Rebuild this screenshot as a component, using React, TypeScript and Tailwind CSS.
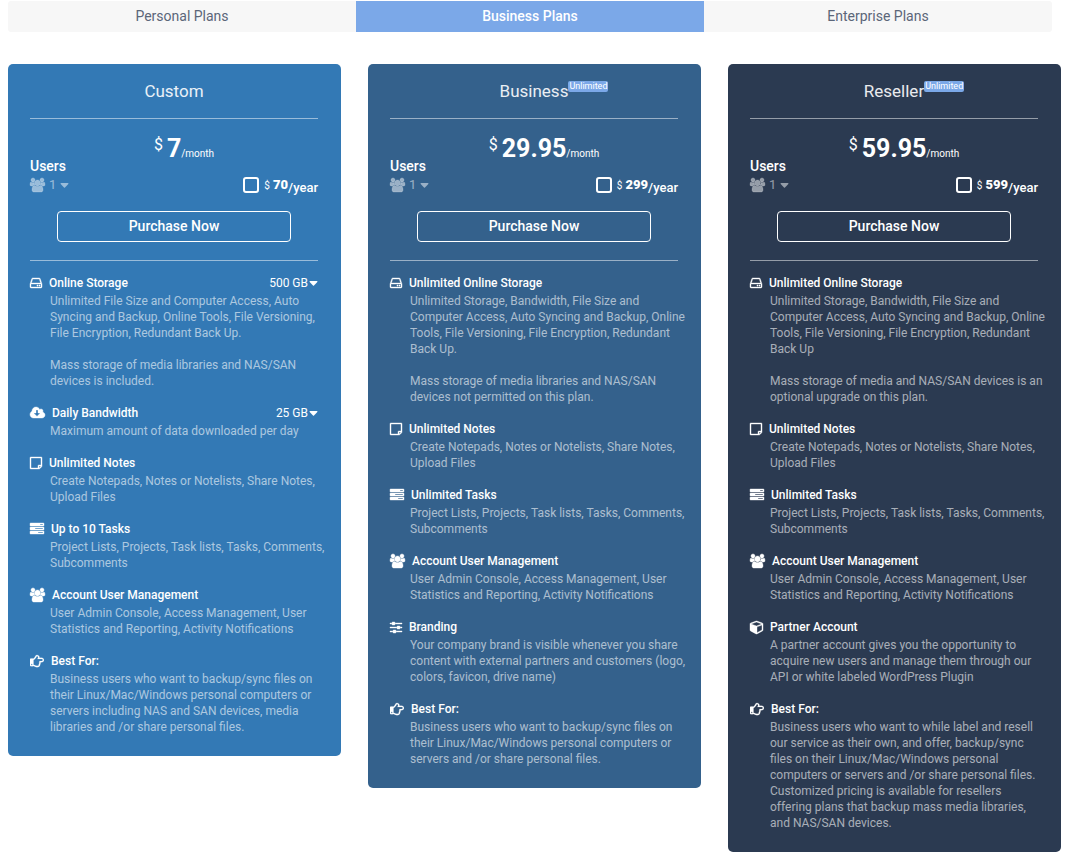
import React from 'react';
import { FaRegHandPointRight } from 'react-icons/fa';

const ICONS = {
    users: {
        box: '0 0 1920 1792',
        d: 'M593 896q-162 5-265 128H194q-82 0-138-40.5T0 865q0-353 124-353 6 0 43.5 21t97.5 42.5T384 597q67 0 133-23-5 37-5 66 0 139 81 256zm1071 637q0 120-73 189.5t-194 69.5H523q-121 0-194-69.5T256 1533q0-53 3.5-103.5t14-109T300 1212t43-97.5 62-81 85.5-53.5T602 960q10 0 43 21.5t73 48 107 48 135 21.5 135-21.5 107-48 73-48 43-21.5q61 0 111.5 20t85.5 53.5 62 81 43 97.5 26.5 108.5 14 109 3.5 103.5zM640 256q0 106-75 181t-181 75-181-75-75-181 75-181T384 0t181 75 75 181zm704 384q0 159-112.5 271.5T960 1024 688.5 911.5 576 640t112.5-271.5T960 256t271.5 112.5T1344 640zm576 225q0 78-56 118.5t-138 40.5h-134q-103-123-265-128 81-117 81-256 0-29-5-66 66 23 133 23 59 0 119-21.5t97.5-42.5 43.5-21q124 0 124 353zm-128-609q0 106-75 181t-181 75-181-75-75-181 75-181 181-75 181 75 75 181z',
        size: 'w-[15px] h-[14px]',
    },
    storage: {
        box: '0 0 1536 1792',
        d: 'M1040 1216q0 33-23.5 56.5T960 1296t-56.5-23.5T880 1216t23.5-56.5T960 1136t56.5 23.5 23.5 56.5zm256 0q0 33-23.5 56.5t-56.5 23.5-56.5-23.5-23.5-56.5 23.5-56.5 56.5-23.5 56.5 23.5 23.5 56.5zm112 160v-320q0-13-9.5-22.5T1376 1024H160q-13 0-22.5 9.5T128 1056v320q0 13 9.5 22.5t22.5 9.5h1216q13 0 22.5-9.5t9.5-22.5zM178 896h1180l-157-482q-4-13-16-21.5t-26-8.5H377q-14 0-26 8.5T335 414zm1358 160v320q0 66-47 113t-113 47H160q-66 0-113-47T0 1376v-320q0-25 16-75l197-606q17-53 63-86t101-33h782q55 0 101 33t63 86l197 606q16 50 16 75z',
        size: 'w-[12px] h-[14px]',
    },
    bandwidth: {
        box: '0 0 1920 1792',
        d: 'M1280 928q0-14-9-23t-23-9h-224V544q0-13-9.5-22.5T992 512H800q-13 0-22.5 9.5T768 544v352H544q-13 0-22.5 9.5T512 928q0 14 9 23l352 352q9 9 23 9t23-9l351-351q10-12 10-24zm640 224q0 159-112.5 271.5T1536 1536H448q-185 0-316.5-131.5T0 1088q0-130 70-240t188-165q-2-30-2-43 0-212 150-362t362-150q156 0 285.5 87T1242 446q71-62 166-62 106 0 181 75t75 181q0 76-41 138 130 31 213.5 135.5T1920 1152z',
        size: 'w-[15px] h-[14px]',
    },
    notes: {
        box: '0 0 1536 1792',
        d: 'M1400 1280h-248v248q29-10 41-22l185-185q12-12 22-41zM1120 1152h288V256H128v1280h896v-288q0-40 28-68t68-28zM1536 224v1024q0 40-20 88t-48 76l-184 184q-28 28-76 48t-88 20H96q-40 0-68-28t-28-68V224q0-40 28-68t68-28h1344q40 0 68 28t28 68z',
        size: 'w-[12px] h-[14px]',
    },
    tasks: {
        box: '0 0 1792 1792',
        d: 'M1024 1408h640v-128h-640v128zm-384-512h1024V768H640v128zm640-512h384V256h-384v128zm512 832v256q0 26-19 45t-45 19H64q-26 0-45-19t-19-45v-256q0-26 19-45t45-19h1664q26 0 45 19t19 45zm0-512v256q0 26-19 45t-45 19H64q-26 0-45-19T0 960V704q0-26 19-45t45-19h1664q26 0 45 19t19 45zm0-512v256q0 26-19 45t-45 19H64q-26 0-45-19T0 448V192q0-26 19-45t45-19h1664q26 0 45 19t19 45z',
        size: 'w-[14px] h-[14px]',
    },
    sliders: {
        box: '0 0 1536 1792',
        d: 'M352 1408v128H0v-128h352zm352-128q26 0 45 19t19 45v256q0 26-19 45t-45 19H448q-26 0-45-19t-19-45v-256q0-26 19-45t45-19h256zm160-384v128H0V896h864zM224 384v128H0V384h224zm1312 1024v128H800v-128h736zM576 256q26 0 45 19t19 45v256q0 26-19 45t-45 19H320q-26 0-45-19t-19-45V320q0-26 19-45t45-19h256zm640 512q26 0 45 19t19 45v256q0 26-19 45t-45 19H960q-26 0-45-19t-19-45V832q0-26 19-45t45-19h256zm320 128v128h-224V896h224zm0-512v128H672V384h864z',
        size: 'w-[12px] h-[14px]',
    },
    cube: {
        box: '0 0 1664 1792',
        d: 'M896 1629l640-349V644l-640 233v752zm-64-865l698-254-698-254-698 254zm832-252v768q0 35-18 65t-49 47l-704 384q-28 16-61 16t-61-16L67 1392q-31-17-49-47t-18-65V512q0-40 23-73t61-47l704-256q22-8 44-8t44 8l704 256q38 14 61 47t23 73z',
        size: 'w-[13px] h-[14px]',
    },
};

type IconName = keyof typeof ICONS | 'hand';

function Icon({ name }: { name: IconName }) {
    if (name === 'hand') {
        return <FaRegHandPointRight className="w-[14px] h-[14px] shrink-0" stroke="currentColor" strokeWidth={6} />;
    }
    const icon = ICONS[name];
    return (
        <svg
            viewBox={icon.box}
            className={`${icon.size} shrink-0 overflow-visible`}
            fill="currentColor"
            stroke="currentColor"
            strokeWidth={50}
            aria-hidden="true"
        >
            <path d={icon.d} />
        </svg>
    );
}

function Caret() {
    return (
        <svg viewBox="0 0 10 6" className="w-[9px] h-[5px] shrink-0" fill="currentColor" aria-hidden="true">
            <path d="M1 0h8q1.2.2.6 1.200L5.600 5.500q-.6.6-1.200 0L.4 1.200Q-.2.2 1 0z" />
        </svg>
    );
}

interface Feature {
    icon: IconName;
    title: string;
    text: string[];
    options?: string[];
}

interface Plan {
    name: string;
    badge?: string;
    bg: string;
    month: string;
    year: string;
    features: Feature[];
}

const NOTES: Feature = {
    icon: 'notes',
    title: 'Unlimited Notes',
    text: ['Create Notepads, Notes or Notelists, Share Notes, Upload Files'],
};

const TASKS: Feature = {
    icon: 'tasks',
    title: 'Unlimited Tasks',
    text: ['Project Lists, Projects, Task lists, Tasks, Comments, Subcomments'],
};

const MANAGEMENT: Feature = {
    icon: 'users',
    title: 'Account User Management',
    text: ['User Admin Console, Access Management, User Statistics and Reporting, Activity Notifications'],
};

const PLANS: Plan[] = [
    {
        name: 'Custom',
        bg: 'bg-[#3379b5]',
        month: '7',
        year: '70',
        features: [
            {
                icon: 'storage',
                title: 'Online Storage',
                options: ['500 GB', '1000 GB', '2000 GB'],
                text: [
                    'Unlimited File Size and Computer Access, Auto Syncing and Backup, Online Tools, File Versioning, File Encryption, Redundant Back Up.',
                    'Mass storage of media libraries and NAS/SAN devices is included.',
                ],
            },
            {
                icon: 'bandwidth',
                title: 'Daily Bandwidth',
                options: ['25 GB', '50 GB', '100 GB'],
                text: ['Maximum amount of data downloaded per day'],
            },
            NOTES,
            { ...TASKS, title: 'Up to 10 Tasks' },
            MANAGEMENT,
            {
                icon: 'hand',
                title: 'Best For:',
                text: ['Business users who want to backup/sync files on their Linux/Mac/Windows personal computers or servers including NAS and SAN devices, media libraries and /or share personal files.'],
            },
        ],
    },
    {
        name: 'Business',
        badge: 'Unlimited',
        bg: 'bg-[#34618c]',
        month: '29.95',
        year: '299',
        features: [
            {
                icon: 'storage',
                title: 'Unlimited Online Storage',
                text: [
                    'Unlimited Storage, Bandwidth, File Size and Computer Access, Auto Syncing and Backup, Online Tools, File Versioning, File Encryption, Redundant Back Up.',
                    'Mass storage of media libraries and NAS/SAN devices not permitted on this plan.',
                ],
            },
            NOTES,
            TASKS,
            MANAGEMENT,
            {
                icon: 'sliders',
                title: 'Branding',
                text: ['Your company brand is visible whenever you share content with external partners and customers (logo, colors, favicon, drive name)'],
            },
            {
                icon: 'hand',
                title: 'Best For:',
                text: ['Business users who want to backup/sync files on their Linux/Mac/Windows personal computers or servers and /or share personal files.'],
            },
        ],
    },
    {
        name: 'Reseller',
        badge: 'Unlimited',
        bg: 'bg-[#2b3a51]',
        month: '59.95',
        year: '599',
        features: [
            {
                icon: 'storage',
                title: 'Unlimited Online Storage',
                text: [
                    'Unlimited Storage, Bandwidth, File Size and Computer Access, Auto Syncing and Backup, Online Tools, File Versioning, File Encryption, Redundant Back Up',
                    'Mass storage of media and NAS/SAN devices is an optional upgrade on this plan.',
                ],
            },
            NOTES,
            TASKS,
            MANAGEMENT,
            {
                icon: 'cube',
                title: 'Partner Account',
                text: ['A partner account gives you the opportunity to acquire new users and manage them through our API or white labeled WordPress Plugin'],
            },
            {
                icon: 'hand',
                title: 'Best For:',
                text: ['Business users who want to while label and resell our service as their own, and offer, backup/sync files on their Linux/Mac/Windows personal computers or servers and /or share personal files. Customized pricing is available for resellers offering plans that backup mass media libraries, and NAS/SAN devices.'],
            },
        ],
    },
];

const TABS = ['Personal Plans', 'Business Plans', 'Enterprise Plans'];

function FeatureItem({ feature }: { feature: Feature }) {
    return (
        <li>
            <div className="flex h-5 items-center text-[12px] text-white">
                <Icon name={feature.icon} />
                <h3 className="ml-[7px] flex-1 font-medium">{feature.title}</h3>
                {feature.options && (
                    <label className="flex items-center gap-px">
                        <select
                            aria-label={feature.title}
                            className="appearance-none field-sizing-content bg-transparent text-right outline-none"
                        >
                            {feature.options.map(o => <option key={o}>{o}</option>)}
                        </select>
                        <Caret />
                    </label>
                )}
            </div>
            <div className="-mr-2 space-y-4 pl-5 text-[12px] leading-4 text-white/60">
                {feature.text.map(t => <p key={t}>{t}</p>)}
            </div>
        </li>
    );
}

function PlanCard({ plan }: { plan: Plan }) {
    return (
        <section className={`rounded-[5px] pl-[22px] pr-[23px] pb-[21px] text-white ${plan.bg}`}>
            <h2 className="flex h-[55px] items-center justify-center border-b border-white/50 pt-[2px] text-[17px] text-white/90">
                <span className="relative">
                    {plan.name}
                    {plan.badge && (
                        <span className="absolute left-full top-[2px] rounded-[2px] bg-[#7ba8e8] px-px text-[9px] leading-[11px] text-white">
                            {plan.badge}
                        </span>
                    )}
                </span>
            </h2>

            <div className="flex h-[38px] items-baseline justify-center pl-5 pt-[18px]">
                <span className="mr-1 self-start text-[16px] leading-4">$</span>
                <span className="text-[25px] leading-6 font-bold">{plan.month}</span>
                <span className="text-[10px] leading-4">/month</span>
            </div>

            <div className="flex items-end justify-between">
                <div>
                    <div className="text-[14px] leading-[18px] font-medium">Users</div>
                    <label className="flex h-5 items-center text-[13px] text-white/50">
                        <Icon name="users" />
                        <select
                            aria-label={`${plan.name} users`}
                            className="ml-1 appearance-none field-sizing-content bg-transparent outline-none"
                        >
                            <option>1</option>
                            <option>2</option>
                            <option>5</option>
                        </select>
                        <span className="ml-1"><Caret /></span>
                    </label>
                </div>
                <label className="flex h-5 items-center">
                    <input
                        type="checkbox"
                        className="mr-[5px] size-4 appearance-none rounded-[3px] border-2 border-white checked:bg-white"
                    />
                    <span className="text-[10px]">$</span>
                    <span className="ml-[3px] text-[13px] font-black">{plan.year}</span>
                    <span className="mt-[6px] text-[13px] font-medium">/year</span>
                </label>
            </div>

            <div className="mt-4 border-b border-white/50 px-[27px] pb-[18px]">
                <button
                    type="button"
                    className="h-[31px] w-full rounded-[4px] border border-white text-[14px] font-medium"
                >
                    Purchase Now
                </button>
            </div>

            <ul className="mt-3 space-y-[14px]">
                {plan.features.map(f => <FeatureItem key={f.title} feature={f} />)}
            </ul>
        </section>
    );
}

export default function App() {
    return (
        <main className="min-h-screen bg-white pl-2 pr-[6px] pt-px font-['Roboto',sans-serif]">
            <nav className="mr-[9px] flex overflow-hidden rounded-[3px] bg-[#f7f7f7] text-[14px]">
                {TABS.map(tab => (
                    <button
                        key={tab}
                        type="button"
                        className={tab === 'Business Plans'
                            ? 'h-[31px] flex-1 bg-[#7ba8e8] font-medium text-white'
                            : 'h-[31px] flex-1 text-[#5b6679]'}
                    >
                        {tab}
                    </button>
                ))}
            </nav>

            <div className="mt-8 grid grid-cols-3 items-start gap-[27px]">
                {PLANS.map(plan => <PlanCard key={plan.name} plan={plan} />)}
            </div>
        </main>
    );
}
